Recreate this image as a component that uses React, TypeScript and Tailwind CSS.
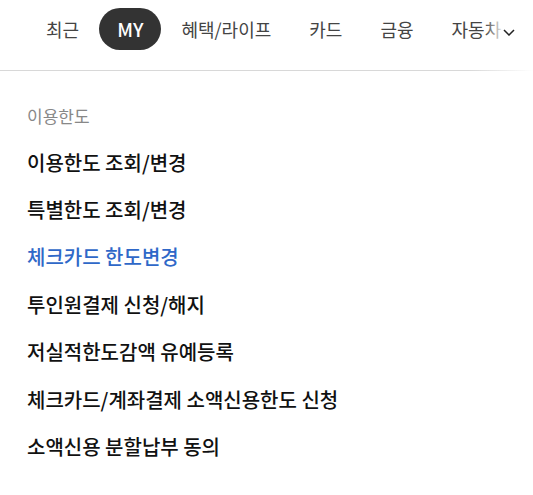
import React from "react";

const tabs = ["최근", "MY", "혜택/라이프", "카드", "금융", "자동차"];
const items = [
  { t: "이용한도 조회/변경" },
  { t: "특별한도 조회/변경" },
  { t: "체크카드 한도변경", active: true },
  { t: "투인원결제 신청/해지" },
  { t: "저실적한도감액 유예등록" },
  { t: "체크카드/계좌결제 소액신용한도 신청" },
  { t: "소액신용 분할납부 동의" },
];

export default function App() {
  return (
    <div
      className="w-[533px] h-[495px] bg-white overflow-hidden"
      style={{ fontFamily: '"Noto Sans CJK KR", "Noto Sans", sans-serif' }}
    >
      <div className="relative h-[70px]">
        <div className="flex items-center pl-[28px] pt-[8px] gap-[2px] whitespace-nowrap">
          {tabs.map((t) =>
            t === "MY" ? (
              <div
                key={t}
                className="h-[42px] px-[18px] rounded-full bg-[#333333] text-white text-[19px] font-medium flex items-center"
              >
                {t}
              </div>
            ) : (
              <div key={t} className="h-[42px] px-[18px] text-[#444] text-[18px] flex items-center">
                {t}
              </div>
            )
          )}
        </div>
        <div className="absolute left-[485px] top-0 h-[70px] w-[48px] bg-gradient-to-r from-white/0 to-white to-40%" />
        <svg
          className="absolute left-[503px] top-[29px]"
          width="12"
          height="7"
          viewBox="0 0 12 7"
          fill="none"
          stroke="#222"
          strokeWidth="1.5"
        >
          <path d="M1 1 L6 6 L11 1" />
        </svg>
      </div>
      <div className="h-px bg-gradient-to-r from-[#d8d8d8] via-[#d8d8d8] via-88% to-white" />
      <div className="pl-[27px] pt-[33px]">
        <div className="text-[17px] text-[#888] leading-[24px]">이용한도</div>
        <div className="mt-[11px] flex flex-col">
          {items.map((it) => (
            <div
              key={it.t}
              className={`h-[47.4px] flex items-center text-[20px] font-medium ${
                it.active ? "text-[#2f68c8]" : "text-[#111]"
              }`}
            >
              {it.t}
            </div>
          ))}
        </div>
      </div>
    </div>
  );
}
